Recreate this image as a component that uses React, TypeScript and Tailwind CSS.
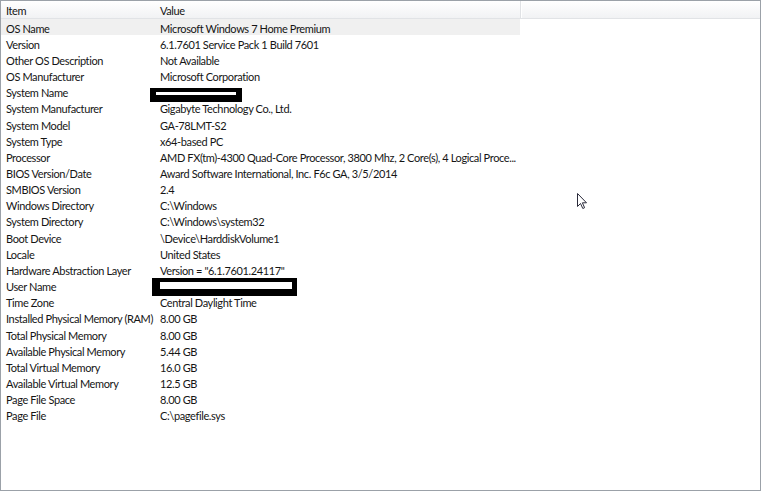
import React from "react";

type Row = { item: string; value?: string; redact?: "small" | "large" };

const rows: Row[] = [
  { item: "OS Name", value: "Microsoft Windows 7 Home Premium" },
  { item: "Version", value: "6.1.7601 Service Pack 1 Build 7601" },
  { item: "Other OS Description", value: "Not Available" },
  { item: "OS Manufacturer", value: "Microsoft Corporation" },
  { item: "System Name", redact: "small" },
  { item: "System Manufacturer", value: "Gigabyte Technology Co., Ltd." },
  { item: "System Model", value: "GA-78LMT-S2" },
  { item: "System Type", value: "x64-based PC" },
  { item: "Processor", value: "AMD FX(tm)-4300 Quad-Core Processor, 3800 Mhz, 2 Core(s), 4 Logical Proce..." },
  { item: "BIOS Version/Date", value: "Award Software International, Inc. F6c GA, 3/5/2014" },
  { item: "SMBIOS Version", value: "2.4" },
  { item: "Windows Directory", value: "C:\\Windows" },
  { item: "System Directory", value: "C:\\Windows\\system32" },
  { item: "Boot Device", value: "\\Device\\HarddiskVolume1" },
  { item: "Locale", value: "United States" },
  { item: "Hardware Abstraction Layer", value: 'Version = "6.1.7601.24117"' },
  { item: "User Name", redact: "large" },
  { item: "Time Zone", value: "Central Daylight Time" },
  { item: "Installed Physical Memory (RAM)", value: "8.00 GB" },
  { item: "Total Physical Memory", value: "8.00 GB" },
  { item: "Available Physical Memory", value: "5.44 GB" },
  { item: "Total Virtual Memory", value: "16.0 GB" },
  { item: "Available Virtual Memory", value: "12.5 GB" },
  { item: "Page File Space", value: "8.00 GB" },
  { item: "Page File", value: "C:\\pagefile.sys" },
];

export default function App() {
  return (
    <div
      className="relative w-[761px] h-[491px] border border-[#9ba1a8] bg-white text-[11px] tracking-[-0.38px] text-[#151515] overflow-hidden"
      style={{ fontFamily: 'Lato, "Liberation Sans", Arial, sans-serif' }}
    >
      {/* header */}
      <div className="flex h-[18px] bg-gradient-to-b from-white to-[#f1f2f4] border-b border-[#e1e3e6]">
        <div className="w-[154px] pl-[5px] flex items-center leading-none pt-[1px]">Item</div>
        <div className="w-[365px] pl-[5px] flex items-center leading-none pt-[1px]">Value</div>
        <div className="w-px bg-[#e0e2e5]" />
        <div className="w-px bg-white" />
        <div className="flex-1" />
      </div>
      {/* rows */}
      <div className="flex flex-col">
        {rows.map((r, i) => (
          <div
            key={r.item}
            className={`relative flex w-[519px] h-[16.17px] items-center leading-none pt-[2px] ${i === 0 ? "bg-[#f0f0f0]" : ""}`}
          >
            <div className="w-[154px] shrink-0 pl-[5px] whitespace-nowrap">{r.item}</div>
            <div className="w-[365px] shrink-0 pl-[5px] whitespace-nowrap">{r.value}</div>
            {r.redact === "small" && (
              <div className="absolute left-[149px] top-[4px] w-[92px] h-[14px] bg-black pt-[4px] px-[6px]">
                <div className="w-full h-[3px] bg-white" />
              </div>
            )}
            {r.redact === "large" && (
              <div className="absolute left-[151px] top-0 w-[145px] h-[18px] bg-black pt-[4px] pl-[8px] pr-[5px] pb-[7px]">
                <div className="w-full h-full bg-white" />
              </div>
            )}
          </div>
        ))}
      </div>
      {/* mouse cursor */}
      <svg className="absolute left-[576px] top-[192px]" width="11" height="17" viewBox="0 0 11 17">
        <path
          d="M0.5 0.5 L0.5 13.5 L3.5 10.5 L5.8 15.5 L7.6 14.7 L5.4 9.8 L9.5 9.8 Z"
          fill="white"
          stroke="#2a2a3a"
          strokeWidth="1"
          strokeLinejoin="round"
        />
      </svg>
    </div>
  );
}
